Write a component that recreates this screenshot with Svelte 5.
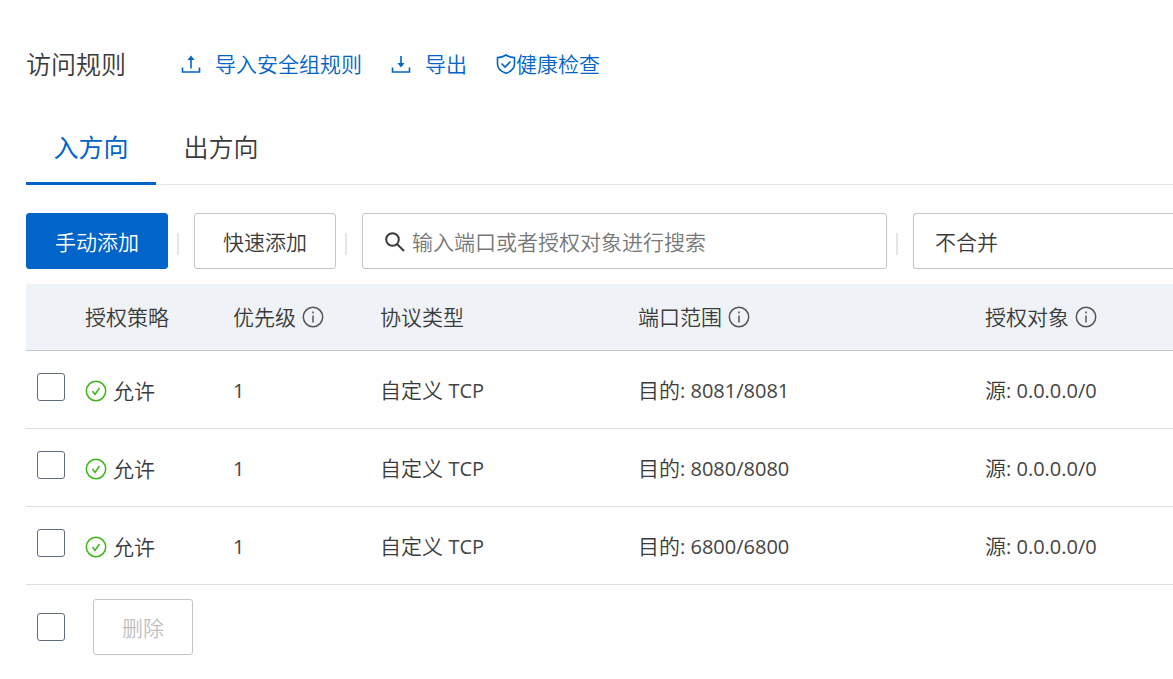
<script lang="ts">
	type Direction = 'in' | 'out';
	type Rule = { id: number; policy: string; priority: number; type: string; protocol: string; port: string; source: string };

	const tabs: { key: Direction; label: string }[] = [
		{ key: 'in', label: '入方向' },
		{ key: 'out', label: '出方向' }
	];

	const columns = [
		{ key: 'policy', label: '授权策略', info: false },
		{ key: 'priority', label: '优先级', info: true },
		{ key: 'protocol', label: '协议类型', info: false },
		{ key: 'port', label: '端口范围', info: true },
		{ key: 'source', label: '授权对象', info: true }
	];

	const rules: Rule[] = [
		{ id: 1, policy: '允许', priority: 1, type: '自定义', protocol: 'TCP', port: '8081/8081', source: '0.0.0.0/0' },
		{ id: 2, policy: '允许', priority: 1, type: '自定义', protocol: 'TCP', port: '8080/8080', source: '0.0.0.0/0' },
		{ id: 3, policy: '允许', priority: 1, type: '自定义', protocol: 'TCP', port: '6800/6800', source: '0.0.0.0/0' }
	];

	let active = $state<Direction>('in');
	let keyword = $state('');
	let merge = $state('none');
	let selected = $state<number[]>([]);

	function toggleAll(e: Event) {
		const { checked } = e.currentTarget as HTMLInputElement;
		selected = checked ? rules.map((rule) => rule.id) : [];
	}
</script>

<main class="page">
	<header class="header">
		<h1 class="title">访问规则</h1>
		<nav class="actions">
			<a class="action" href="#import">
				<svg class="icon" viewBox="0 0 20 20" aria-hidden="true">
					<path d="M1.500 13.500v4.500h17v-4.500M10 14.500V4" />
					<path class="solid" d="M10 1.500 6.500 6h7z" />
				</svg>
				导入安全组规则
			</a>
			<a class="action" href="#export">
				<svg class="icon" viewBox="0 0 20 20" aria-hidden="true">
					<path d="M1.500 13.500v4.500h17v-4.500M10 2v9" />
					<path class="solid" d="M10 13.500 6.500 9h7z" />
				</svg>
				导出
			</a>
			<a class="action tight" href="#health">
				<svg class="icon" viewBox="0 0 20 20" aria-hidden="true">
					<path d="M10 1c2.500 1.800 5 2.500 8.500 2.600V10c0 4.500-3.500 7.500-8.500 9.300C5 17.500 1.500 14.500 1.500 10V3.600C5 3.500 7.500 2.800 10 1z" />
					<path d="m5.500 9.500 3.500 3.500 5.500-5.500" />
				</svg>
				健康检查
			</a>
		</nav>
	</header>

	<div class="tabs" role="tablist">
		{#each tabs as tab}
			<button class="tab" class:active={active === tab.key} role="tab" aria-selected={active === tab.key} onclick={() => (active = tab.key)}>
				{tab.label}
			</button>
		{/each}
	</div>

	<div class="toolbar">
		<button class="btn primary">手动添加</button>
		<span class="divider"></span>
		<button class="btn">快速添加</button>
		<span class="divider"></span>
		<label class="search">
			<svg class="icon" viewBox="0 0 20 20" aria-hidden="true">
				<circle cx="7.500" cy="7.500" r="6.300" />
				<path d="m12 12 7 7" />
			</svg>
			<input type="text" placeholder="输入端口或者授权对象进行搜索" aria-label="搜索" bind:value={keyword} />
		</label>
		<span class="divider"></span>
		<select class="merge" aria-label="合并方式" bind:value={merge}>
			<option value="none">不合并</option>
		</select>
	</div>

	<table class="table">
		<thead>
			<tr>
				<th class="col-check"></th>
				{#each columns as column}
					<th class="col-{column.key}">
						<span class="cell">
							{column.label}
							{#if column.info}
								<svg class="icon info" viewBox="0 0 22 22" aria-hidden="true">
									<circle cx="11" cy="11" r="9.700" />
									<path d="M11 9.500v7M11 5.500v2" />
								</svg>
							{/if}
						</span>
					</th>
				{/each}
			</tr>
		</thead>
		<tbody>
			{#each rules as rule (rule.id)}
				<tr>
					<td class="check"><input type="checkbox" aria-label="选择规则 {rule.id}" value={rule.id} bind:group={selected} /></td>
					<td>
						<span class="cell">
							<svg class="icon allow" viewBox="0 0 22 22" aria-hidden="true">
								<circle cx="11" cy="11" r="9.700" />
								<path d="m7.500 11 2.500 3.500L14.500 8" />
							</svg>
							{rule.policy}
						</span>
					</td>
					<td><span class="value">{rule.priority}</span></td>
					<td>{rule.type} <span class="value">{rule.protocol}</span></td>
					<td>目的<span class="value">: {rule.port}</span></td>
					<td>源<span class="value">: {rule.source}</span></td>
				</tr>
			{/each}
		</tbody>
	</table>

	<footer class="footer">
		<input type="checkbox" aria-label="全选" checked={selected.length === rules.length} onchange={toggleAll} />
		<button class="btn delete" disabled={selected.length === 0}>删除</button>
	</footer>
</main>

<style>
	:global(body) {
		margin: 0;
		background: #fefefe;
	}

	.page {
		padding: 40px 0 24px 26px;
		color: #3a3a3a;
		font-family: 'Open Sans', 'Noto Sans CJK SC', sans-serif;
		font-size: 21px;
		font-weight: 350;
		line-height: 32px;
	}

	button,
	input,
	select {
		box-sizing: border-box;
		margin: 0;
		color: inherit;
		font: inherit;
	}

	.icon {
		flex: none;
		width: 20px;
		height: 20px;
		fill: none;
		stroke: currentColor;
		stroke-width: 2;
	}

	.solid {
		fill: currentColor;
		stroke: none;
	}

	.header {
		display: flex;
		align-items: center;
		gap: 55px;
		height: 48px;
	}

	.title {
		margin: 0;
		font-size: 25px;
		font-weight: 350;
	}

	.actions {
		display: flex;
		gap: 29px;
	}

	.action {
		display: flex;
		align-items: center;
		gap: 14px;
		color: #0064c8;
		text-decoration: none;
	}

	.action .icon {
		stroke-width: 1.6;
	}

	.action.tight {
		gap: 0;
	}

	.tabs {
		display: flex;
		height: 72px;
		margin-top: 24px;
		border-bottom: 1px solid #e5e5e5;
	}

	.tab {
		min-width: 130px;
		height: 73px;
		padding: 0;
		border: 0;
		border-bottom: 3px solid transparent;
		background: none;
		font-size: 25px;
	}

	.tab.active {
		border-color: #0064c8;
		color: #0064c8;
		font-weight: 400;
	}

	.toolbar {
		display: flex;
		align-items: center;
		margin: 28px 0 15px;
	}

	.btn {
		min-width: 142px;
		height: 56px;
		padding: 2px 0 0;
		border: 1px solid #c0c6cc;
		border-radius: 3px;
		background: #fff;
	}

	.btn.primary {
		border-color: #0064c8;
		background: #0064c8;
		color: #fff;
	}

	.divider {
		flex: none;
		width: 2px;
		height: 22px;
		margin: 6px 15px 0 9px;
		background: #e6e6e6;
	}

	.search {
		display: flex;
		flex: 1;
		align-items: center;
		gap: 7px;
		box-sizing: border-box;
		height: 56px;
		padding: 2px 22px 0;
		border: 1px solid #c0c6cc;
		border-radius: 3px;
		background: #fff;
	}

	.search input {
		flex: 1;
		min-width: 0;
		padding: 0;
		border: 0;
		outline: 0;
		background: none;
	}

	.search input::placeholder {
		color: #777;
	}

	.merge {
		width: 260px;
		height: 56px;
		padding: 2px 21px 0;
		border: 1px solid #c0c6cc;
		border-right: 0;
		border-radius: 3px 0 0 3px;
		background: #fff;
		appearance: none;
	}

	.table {
		width: 100%;
		border-collapse: separate;
		border-spacing: 0;
		table-layout: fixed;
	}

	th,
	td {
		box-sizing: border-box;
		padding: 0;
		text-align: left;
		font-weight: 350;
		white-space: nowrap;
	}

	th {
		height: 67px;
		border-bottom: 1px solid #c0c9d0;
		background: #eff3f8;
	}

	td {
		height: 78px;
		padding-top: 2px;
		border-bottom: 1px solid #dcdee0;
	}

	.col-check {
		width: 59px;
	}

	.col-policy {
		width: 148px;
	}

	.col-priority {
		width: 147px;
	}

	.col-protocol {
		width: 258px;
	}

	.col-port {
		width: 347px;
	}

	.cell {
		display: flex;
		align-items: center;
		gap: 6px;
	}

	.value {
		color: #444;
		font-size: 20px;
		font-weight: 400;
	}

	.info,
	.allow {
		width: 22px;
		height: 22px;
		stroke-width: 1.5;
	}

	.info {
		color: #555;
	}

	.allow {
		color: #3fb618;
	}

	input[type='checkbox'] {
		display: block;
		flex: none;
		width: 28px;
		height: 28px;
		border: 1px solid #5f6b7c;
		border-radius: 3px;
		background: #fff;
		appearance: none;
	}

	input[type='checkbox']:checked {
		background: #0064c8;
		box-shadow: inset 0 0 0 5px #fff;
	}

	.check {
		padding: 0 0 5px 11px;
	}

	.footer {
		display: flex;
		align-items: center;
		gap: 28px;
		padding: 14px 0 0 11px;
	}

	.delete {
		min-width: 100px;
	}

	.delete:disabled {
		color: #bfbfbf;
	}
</style>
